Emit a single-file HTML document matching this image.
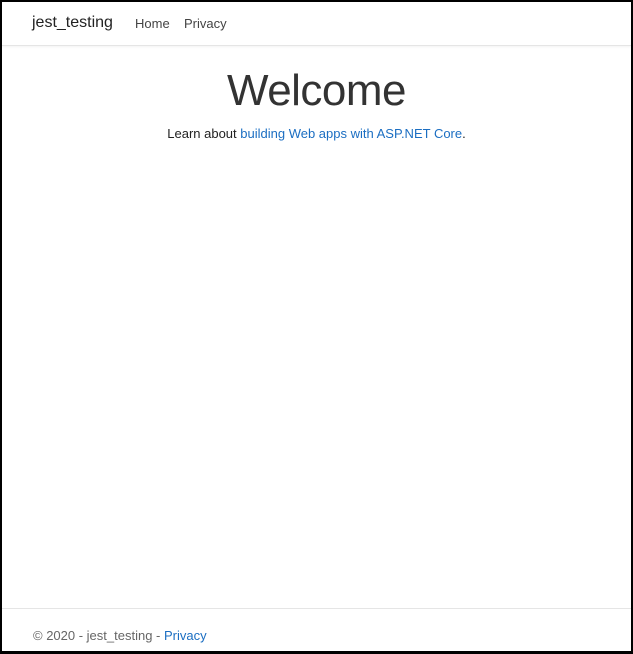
<!DOCTYPE html>
<html><head><style>
html,body{margin:0;padding:0;}
body{width:633px;height:654px;box-sizing:border-box;border:2px solid #000;border-bottom-width:3px;position:relative;font-family:"Liberation Sans",sans-serif;background:#fff;overflow:hidden;}
.nav{position:absolute;left:0;top:0;right:0;height:43px;border-bottom:1px solid #e5e5e5;box-shadow:0 1px 2px rgba(0,0,0,.05);}
.brand{position:absolute;left:30px;top:12px;font-size:16px;color:#222;}
.l{position:absolute;top:14px;font-size:13px;color:#444;}
h1{position:absolute;left:0;right:0;top:64px;margin:0;text-align:center;font-size:44px;font-weight:300;color:#333;letter-spacing:-0.5px;}
p{position:absolute;left:0;right:0;top:124px;margin:0;text-align:center;font-size:13px;color:#222;}
a{color:#1b6ec2;text-decoration:none;}
.foot{position:absolute;left:0;right:0;top:606px;border-top:1px solid #e5e5e5;}
.ft{position:absolute;left:31px;top:626px;font-size:13px;color:#666;}
</style></head><body>
<div class="nav"><span class="brand">jest_testing</span><span class="l" style="left:133px">Home</span><span class="l" style="left:182px">Privacy</span></div>
<h1>Welcome</h1>
<p>Learn about <a>building Web apps with ASP.NET Core</a>.</p>
<div class="foot"></div>
<div class="ft">© 2020 - jest_testing - <a>Privacy</a></div>
</body></html>
